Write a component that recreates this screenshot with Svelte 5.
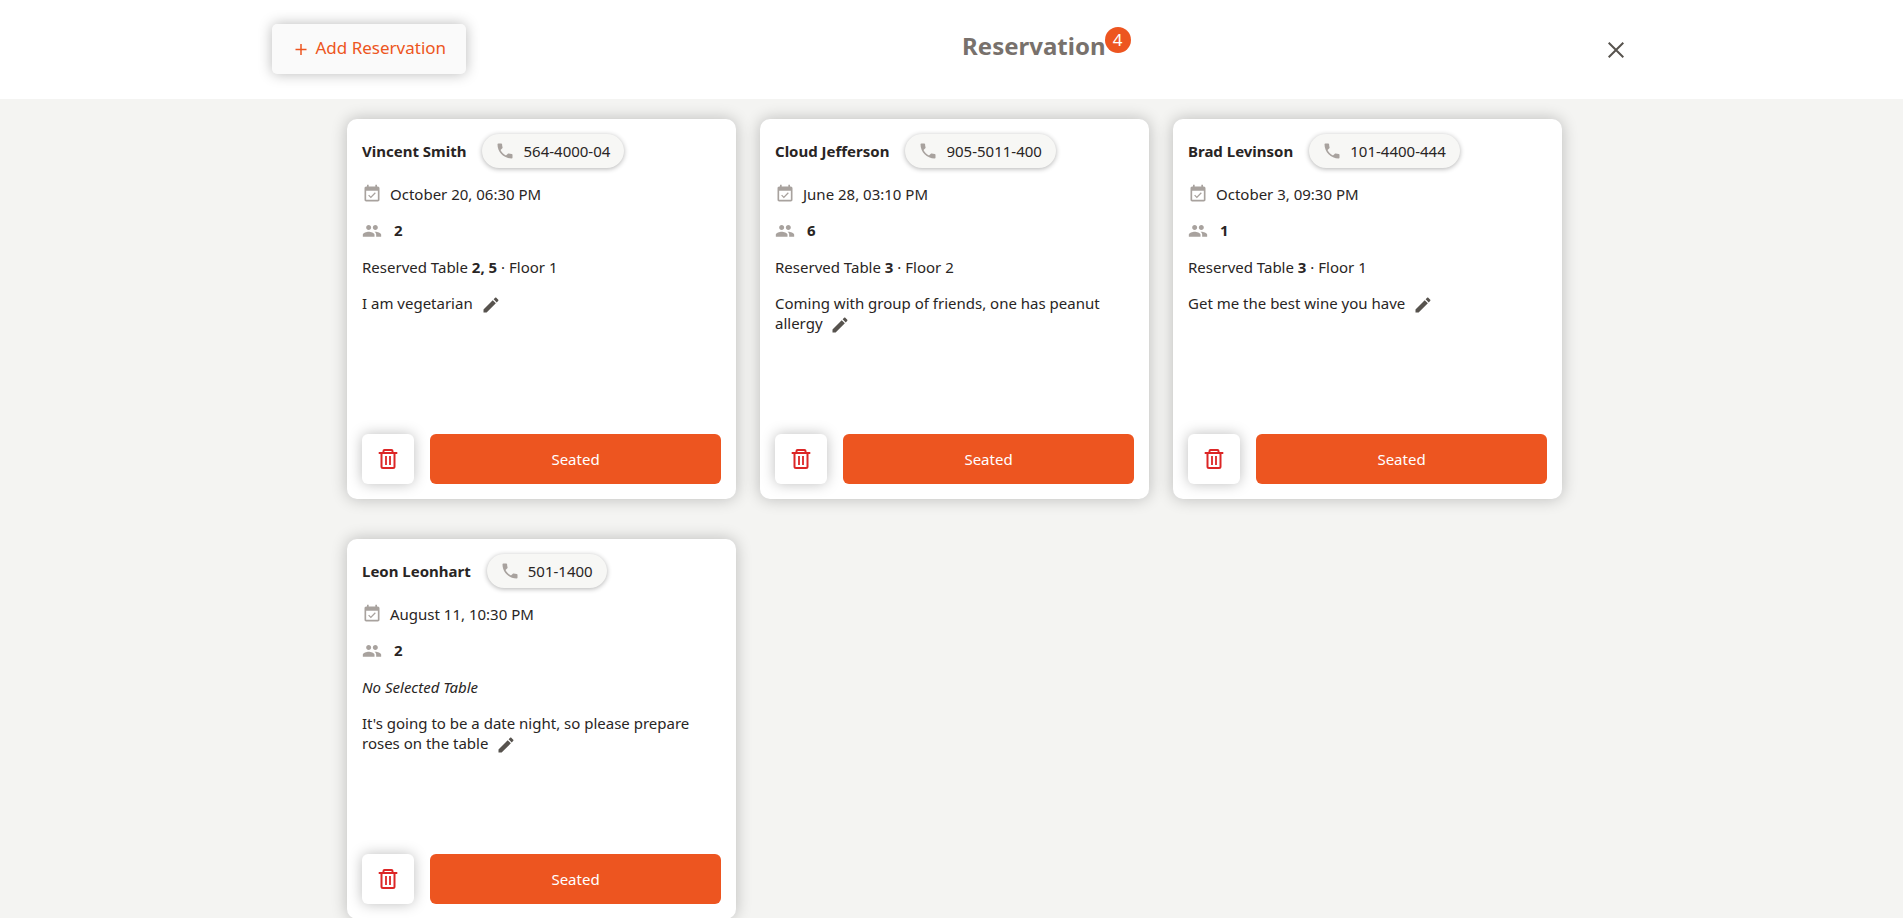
<script>
  const reservations = [
    { name: 'Vincent Smith', phone: '564-4000-04', date: 'October 20, 06:30 PM', guests: 2, tables: '2, 5', floor: 1, note: 'I am vegetarian' },
    { name: 'Cloud Jefferson', phone: '905-5011-400', date: 'June 28, 03:10 PM', guests: 6, tables: '3', floor: 2, note: 'Coming with group of friends, one has peanut allergy' },
    { name: 'Brad Levinson', phone: '101-4400-444', date: 'October 3, 09:30 PM', guests: 1, tables: '3', floor: 1, note: 'Get me the best wine you have' },
    { name: 'Leon Leonhart', phone: '501-1400', date: 'August 11, 10:30 PM', guests: 2, tables: null, floor: null, note: "It's going to be a date night, so please prepare roses on the table" }
  ];
</script>

<header>
  <div class="bar">
    <button class="add" type="button">
      <svg width="12" height="14" viewBox="0 0 12 14" aria-hidden="true"><path d="M6 3v11M.5 8.500h11" stroke="currentColor" stroke-width="1.5" /></svg>
      Add Reservation
    </button>
    <h1>Reservation<span class="badge">{reservations.length}</span></h1>
    <button class="close" type="button" aria-label="Close">
      <svg width="16" height="16" viewBox="0 0 16 16" aria-hidden="true"><path d="M.7.7l14.6 14.6M15.3.7L.7 15.3" stroke="currentColor" stroke-width="2" /></svg>
    </button>
  </div>
</header>

<main>
  {#each reservations as r}
    <article>
      <div class="who">
        <h2>{r.name}</h2>
        <a class="phone" href="tel:{r.phone}">
          <svg width="20" height="20" viewBox="0 0 24 24" fill="currentColor" aria-hidden="true"><path d="M6.62 10.79c1.44 2.83 3.76 5.14 6.59 6.59l2.2-2.2c.27-.27.67-.36 1.02-.24 1.12.37 2.33.57 3.57.57.55 0 1 .45 1 1V20c0 .55-.45 1-1 1-9.39 0-17-7.61-17-17 0-.55.45-1 1-1h3.5c.55 0 1 .45 1 1 0 1.25.2 2.45.57 3.57.11.35.03.74-.25 1.02l-2.2 2.2z" /></svg>
          {r.phone}
        </a>
      </div>
      <p class="row date">
        <svg width="20" height="20" viewBox="0 0 24 24" fill="currentColor" aria-hidden="true"><path d="M16.53 11.06L15.47 10l-4.88 4.88-2.12-2.12-1.06 1.06L10.59 17l5.94-5.94zM19 3h-1V1h-2v2H8V1H6v2H5c-1.11 0-1.99.9-1.99 2L3 19c0 1.1.89 2 2 2h14c1.1 0 2-.9 2-2V5c0-1.1-.9-2-2-2zm0 16H5V8h14v11z" /></svg>
        {r.date}
      </p>
      <p class="row guests">
        <svg width="20" height="20" viewBox="0 -1 24 24" fill="currentColor" aria-hidden="true"><path d="M16 11c1.66 0 2.99-1.34 2.99-3S17.66 5 16 5s-3 1.34-3 3 1.34 3 3 3zm-8 0c1.66 0 2.99-1.34 2.99-3S9.66 5 8 5 5 6.34 5 8s1.34 3 3 3zm0 2c-2.33 0-7 1.17-7 3.5V19h14v-2.500c0-2.330-4.670-3.500-7-3.500zm8 0c-.29 0-.62.02-.97.05 1.160.840 1.970 1.970 1.970 3.450V19h6v-2.500c0-2.330-4.670-3.500-7-3.500z" /></svg>
        <strong>{r.guests}</strong>
      </p>
      {#if r.tables}
        <p class="table">Reserved Table <strong>{r.tables}</strong> · Floor {r.floor}</p>
      {:else}
        <p class="table"><em>No Selected Table</em></p>
      {/if}
      <p class="note">
        {r.note}
        <button class="edit" type="button" aria-label="Edit note">
          <svg width="20" height="20" viewBox="0 0 24 24" fill="currentColor" aria-hidden="true"><path d="M3 17.250V21h3.750L17.810 9.940l-3.750-3.750L3 17.250zM20.710 7.040c.39-.39.39-1.020 0-1.410l-2.340-2.340c-.39-.39-1.020-.39-1.410 0l-1.830 1.830 3.750 3.750 1.830-1.830z" /></svg>
        </button>
      </p>
      <div class="actions">
        <button class="trash" type="button" aria-label="Delete reservation">
          <svg width="20" height="22" viewBox="0 0 20 22" fill="none" stroke="currentColor" aria-hidden="true"><path d="M.7 5h18.600M5.500 5V3Q5.500 2 6.500 2h7Q14.500 2 14.500 3V5M3.500 5v13.500Q3.500 20 5 20h10Q16.500 20 16.500 18.500V5" stroke-width="2" /><path d="M8 8v9M12 8v9" stroke-width="1.800" /></svg>
        </button>
        <button class="seated" type="button">Seated</button>
      </div>
    </article>
  {/each}
</main>

<style>
  :global(body) {
    background: #f4f4f2;
    color: #292524;
    font: 15px/20px 'Segoe UI', 'Noto Sans', sans-serif;
  }
  :global(*) { box-sizing: border-box; }
  h1, h2, p { margin: 0; }
  button {
    border: 0;
    padding: 0;
    background: none;
    font: inherit;
    color: inherit;
    cursor: pointer;
  }
  svg { display: block; flex: none; }
  header {
    background: #fff;
    padding: 24px 24px 25px;
  }
  .bar {
    display: flex;
    align-items: center;
    justify-content: space-between;
    max-width: 1360px;
    margin: 0 auto;
  }
  .add {
    display: flex;
    align-items: center;
    gap: 9px;
    height: 50px;
    padding: 0 20px 2px 23px;
    border-radius: 5px;
    background: #fafafa;
    box-shadow: 0 0 14px rgb(0 0 0 / 28%);
    color: #ed5520;
    font-size: 17px;
  }
  h1 {
    position: relative;
    padding-bottom: 6px;
    color: #78716c;
    font-size: 24px;
    line-height: 32px;
  }
  .badge {
    position: absolute;
    left: 100%;
    top: -3px;
    width: 26px;
    height: 26px;
    margin-left: -1px;
    border-radius: 50%;
    background: #ed5520;
    color: #fff;
    font-size: 17px;
    font-weight: 400;
    line-height: 26px;
    text-align: center;
  }
  .close { padding: 8px 7px 6px; color: #57534e; }
  main {
    display: grid;
    grid-template-columns: repeat(auto-fill, minmax(360px, 1fr));
    gap: 40px 24px;
    max-width: 1221px;
    margin: 0 auto;
    padding: 20px 0 20px 6px;
  }
  article {
    display: flex;
    flex-direction: column;
    min-height: 380px;
    padding: 15px;
    border-radius: 10px;
    background: #fff;
    box-shadow: 0 0 16px rgb(0 0 0 / 24%);
  }
  .who { display: flex; align-items: center; gap: 16px; }
  h2 { font-size: 15px; line-height: 20px; }
  .phone {
    display: flex;
    align-items: center;
    gap: 8px;
    height: 34px;
    padding: 0 14px 0 13px;
    border-radius: 17px;
    background: #f7f7f5;
    box-shadow: 0 1px 5px rgb(0 0 0 / 30%);
    color: inherit;
    text-decoration: none;
  }
  .phone svg, .row svg { color: #a8a29e; }
  .row { display: flex; align-items: center; gap: 8px; margin-top: 16px; }
  .guests { gap: 12px; }
  .table { margin-top: 17px; }
  .note { margin-top: 16px; }
  .edit {
    display: inline-block;
    height: 20px;
    margin: -2px 0 -2px 4px;
    color: #57534e;
    vertical-align: middle;
  }
  .actions { display: flex; gap: 16px; margin-top: auto; }
  .trash {
    display: grid;
    place-items: center;
    width: 52px;
    height: 50px;
    border-radius: 6px;
    background: #fff;
    box-shadow: 0 0 14px rgb(0 0 0 / 26%);
    color: #dc2626;
  }
  .seated {
    flex: 1;
    height: 50px;
    border-radius: 6px;
    background: #ed5520;
    color: #fff;
  }
</style>
